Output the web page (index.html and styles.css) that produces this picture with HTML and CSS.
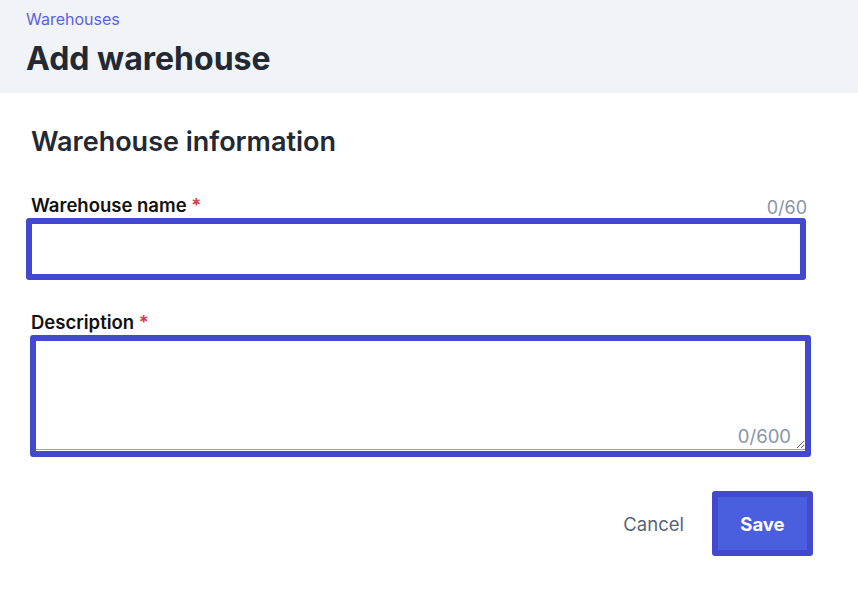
FILE: index.html
```html
<!DOCTYPE html>
<html lang="en">
<head>
    <meta charset="UTF-8">
    <title>Add warehouse</title>
    <link rel="stylesheet" href="styles.css">
</head>
<body>
    <div class="page-header">
        <a class="breadcrumb" href="#">Warehouses</a>
        <h1 class="page-title">Add warehouse</h1>
    </div>
    <form class="form-body">
        <h2 class="section-title">Warehouse information</h2>

        <div class="field-head">
            <label class="field-label" for="name">Warehouse name <span class="req">*</span></label>
            <span class="counter">0/60</span>
        </div>
        <input class="text-input" id="name" type="text">

        <div class="field-head desc-head">
            <label class="field-label" for="desc">Description <span class="req">*</span></label>
        </div>
        <div class="area-wrap">
            <textarea class="text-area" id="desc"></textarea>
            <span class="counter area-counter">0/600</span>
        </div>

        <div class="actions">
            <button type="button" class="cancel-button">Cancel</button>
            <button type="button" class="save-button">Save</button>
        </div>
    </form>
</body>
</html>
```

FILE: styles.css
```css
body {
    margin: 0;
    font-family: Inter, "Noto Sans", sans-serif;
    background-color: #ffffff;
    color: #1f2430;
}
.page-header {
    background-color: #f0f3f8;
    height: 93px;
    box-sizing: border-box;
    padding: 10px 26px 0 26px;
}
.breadcrumb {
    display: block;
    color: #5b5fe6;
    font-size: 16px;
    line-height: 19px;
    text-decoration: none;
}
.page-title {
    margin: 10px 0 0 0;
    font-size: 32px;
    line-height: 40px;
    font-weight: 700;
    color: #232833;
}
.form-body {
    width: 776px;
    padding: 31px 0 0 31px;
}
.section-title {
    margin: 0;
    font-size: 27px;
    line-height: 36px;
    font-weight: 600;
    color: #232833;
}
.field-head {
    display: flex;
    justify-content: space-between;
    align-items: flex-end;
    margin-top: 33px;
    height: 24px;
}
.desc-head {
    margin-top: 30px;
}
.field-label {
    font-size: 18.5px;
    font-weight: 600;
    color: #111111;
    line-height: 24px;
}
.req {
    color: #d9363e;
}
.counter {
    font-size: 18px;
    color: #8a94a6;
    line-height: 22px;
    position: relative;
    top: 2px;
}
.text-input {
    display: block;
    box-sizing: border-box;
    width: 780px;
    height: 62px;
    margin: 1px 0 0 -5px;
    border: 6px solid #4349cc;
    border-radius: 3px;
    outline: none;
    font-family: inherit;
    font-size: 16px;
}
.area-wrap {
    position: relative;
    box-sizing: border-box;
    width: 781px;
    height: 122px;
    margin: 1px 0 0 -1px;
    border: 6px solid #4349cc;
    border-radius: 3px;
}
.text-area {
    display: block;
    box-sizing: border-box;
    width: 100%;
    height: 109px;
    border: none;
    border-bottom: 1px solid #9aa0ad;
    outline: none;
    font-family: inherit;
    font-size: 16px;
    resize: both;
}
.area-counter {
    position: absolute;
    right: 14px;
    bottom: 4px;
    top: auto;
    font-size: 18.5px;
}
.actions {
    display: flex;
    justify-content: flex-end;
    align-items: center;
    gap: 28px;
    margin-top: 34px;
    margin-right: -6px;
}
.cancel-button {
    background: transparent;
    border: none;
    font-family: inherit;
    font-size: 18.5px;
    color: #5a6275;
    padding: 0;
}
.save-button {
    box-sizing: border-box;
    width: 101px;
    height: 65px;
    background-color: #4a5fdf;
    border: 6px solid #4349cc;
    border-radius: 3px;
    color: #ffffff;
    font-family: inherit;
    font-size: 18.5px;
    font-weight: 700;
}
```
